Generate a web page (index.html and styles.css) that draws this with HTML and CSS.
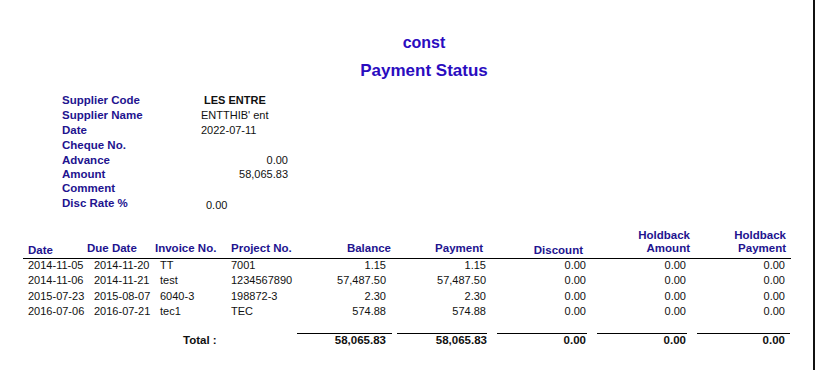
FILE: index.html
```html
<!DOCTYPE html>
<html>
<head>
<meta charset="utf-8">
<link rel="stylesheet" href="styles.css">
</head>
<body>
<div class="page">
  <div class="title-1">const</div>
  <div class="title-2">Payment Status</div>

  <div class="info">
    <div class="lbl">Supplier Code</div><div class="val strong">LES ENTRE</div>
    <div class="lbl">Supplier Name</div><div class="val">ENTTHIB' ent</div>
    <div class="lbl">Date</div><div class="val">2022-07-11</div>
    <div class="lbl">Cheque No.</div><div class="val"></div>
    <div class="lbl">Advance</div><div class="val num">0.00</div>
    <div class="lbl">Amount</div><div class="val num">58,065.83</div>
    <div class="lbl">Comment</div><div class="val"></div>
    <div class="lbl">Disc Rate %</div><div class="val disc">0.00</div>
  </div>

  <div class="table">
    <div class="thead">
      <div class="h c1 low">Date</div>
      <div class="h c2">Due Date</div>
      <div class="h c3">Invoice No.</div>
      <div class="h c4">Project No.</div>
      <div class="h c5">Balance</div>
      <div class="h c6">Payment</div>
      <div class="h c7 low">Discount</div>
      <div class="h c8">Holdback<br>Amount</div>
      <div class="h c9">Holdback<br>Payment</div>
    </div>
    <div class="row">
      <div class="c1">2014-11-05</div><div class="c2">2014-11-20</div><div class="c3">TT</div><div class="c4">7001</div>
      <div class="c5">1.15</div><div class="c6">1.15</div><div class="c7">0.00</div><div class="c8">0.00</div><div class="c9">0.00</div>
    </div>
    <div class="row">
      <div class="c1">2014-11-06</div><div class="c2">2014-11-21</div><div class="c3">test</div><div class="c4">1234567890</div>
      <div class="c5">57,487.50</div><div class="c6">57,487.50</div><div class="c7">0.00</div><div class="c8">0.00</div><div class="c9">0.00</div>
    </div>
    <div class="row">
      <div class="c1">2015-07-23</div><div class="c2">2015-08-07</div><div class="c3">6040-3</div><div class="c4">198872-3</div>
      <div class="c5">2.30</div><div class="c6">2.30</div><div class="c7">0.00</div><div class="c8">0.00</div><div class="c9">0.00</div>
    </div>
    <div class="row">
      <div class="c1">2016-07-06</div><div class="c2">2016-07-21</div><div class="c3">tec1</div><div class="c4">TEC</div>
      <div class="c5">574.88</div><div class="c6">574.88</div><div class="c7">0.00</div><div class="c8">0.00</div><div class="c9">0.00</div>
    </div>
    <div class="total">
      <div></div><div></div>
      <div class="t-label">Total :</div>
      <div></div>
      <div class="t t5">58,065.83</div>
      <div class="t t6">58,065.83</div>
      <div class="t t7">0.00</div>
      <div class="t t8">0.00</div>
      <div class="t t9">0.00</div>
    </div>
  </div>
</div>
</body>
</html>
```

FILE: styles.css
```css
html, body {
  margin: 0;
  padding: 0;
  background: #ffffff;
}

body {
  font-family: "Liberation Sans", Arial, sans-serif;
  color: #111111;
}

.page {
  box-sizing: border-box;
  width: 815px;
  height: 370px;
  border-right: 2px solid #111111;
  padding-top: 33px;
  overflow: hidden;
}

.title-1,
.title-2 {
  text-align: center;
  color: #2a0cbf;
  font-weight: bold;
  padding-left: 35px;
}

.title-1 {
  font-size: 16px;
  line-height: 20px;
}

.title-2 {
  margin-top: 7px;
  font-size: 17px;
  line-height: 22px;
}

.info {
  margin-top: 10.5px;
  margin-left: 62px;
  display: grid;
  grid-template-columns: 139px 87px;
  grid-template-rows: 15px 15px 15px 15px 14.5px 14px 14.5px 15px;
  align-items: center;
}

.lbl {
  font-size: 11.5px;
  font-weight: bold;
  line-height: 14px;
  color: #22138f;
  white-space: nowrap;
}

.val {
  font-size: 11px;
  line-height: 14px;
  white-space: nowrap;
}

.val.strong {
  font-weight: bold;
  padding-left: 3px;
}

.val.num {
  text-align: right;
}

.val.disc {
  padding-left: 5px;
  padding-top: 3px;
}

.table {
  margin-top: 18.5px;
  margin-left: 23px;
  width: 768px;
}

.thead,
.row,
.total {
  display: grid;
  grid-template-columns: 64px 68px 76px 66px 100px 100px 100px 100px 94px;
}

.thead {
  align-items: end;
  border-bottom: 1px solid #000000;
  padding-bottom: 3px;
}

.h {
  font-size: 11.5px;
  font-weight: bold;
  line-height: 13px;
  color: #22138f;
  white-space: nowrap;
}

.h.low {
  margin-bottom: -1.5px;
}

.thead .c1 { padding-left: 5px; }
.thead .c5 { text-align: right; padding-right: 6px; }
.thead .c6 { text-align: right; padding-right: 14px; }
.thead .c7 { text-align: right; padding-right: 14px; }
.thead .c8 { text-align: right; padding-right: 7px; }
.thead .c9 { text-align: right; padding-right: 5px; }

.row {
  font-size: 11px;
  line-height: 13px;
  padding-bottom: 2.3px;
  white-space: nowrap;
}

.row .c1 { padding-left: 5px; }
.row .c2 { padding-left: 7px; }
.row .c3 { padding-left: 5px; }
.row .c5,
.row .c6,
.row .c7,
.row .c8 { text-align: right; padding-right: 11px; }
.row .c9 { text-align: right; padding-right: 6px; }

.total {
  margin-top: 12.8px;
  font-size: 11.5px;
  font-weight: bold;
  line-height: 13px;
  white-space: nowrap;
}

.t-label {
  padding-left: 28px;
  padding-top: 1px;
}

.t {
  border-top: 1px solid #000000;
  text-align: right;
}

.t5 { margin-right: 5px; padding-right: 6px; }
.t6 { margin-right: 10px; padding-right: 0; }
.t7 { margin-right: 10px; padding-right: 1px; }
.t8 { margin-right: 10px; padding-right: 1px; }
.t9 { margin-right: 1px; padding-right: 5px; }
```
